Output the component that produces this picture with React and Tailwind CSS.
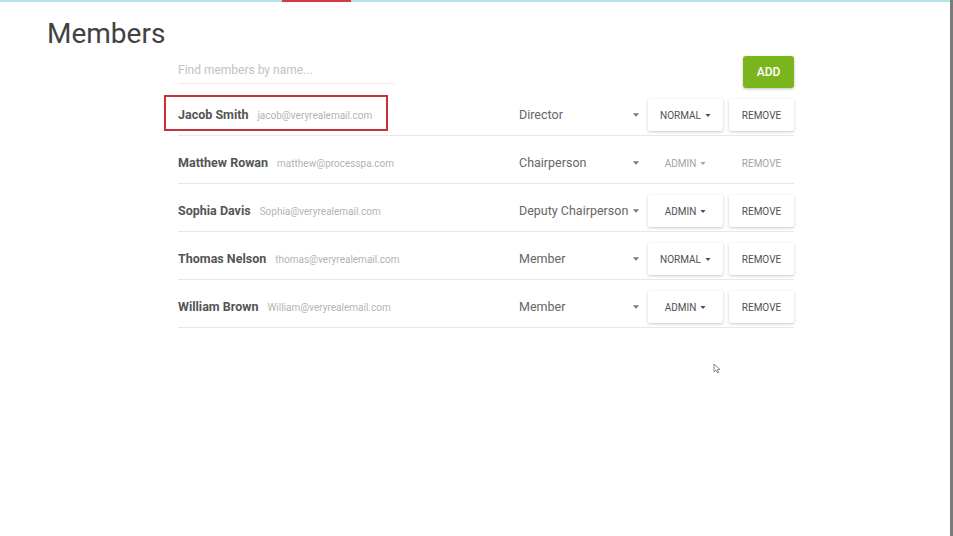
import React from 'react';

const members = [
  { name: 'Jacob Smith', email: 'jacob@veryrealemail.com', role: 'Director', level: 'Normal', flat: false, highlight: true },
  { name: 'Matthew Rowan', email: 'matthew@processpa.com', role: 'Chairperson', level: 'Admin', flat: true },
  { name: 'Sophia Davis', email: 'Sophia@veryrealemail.com', role: 'Deputy Chairperson', level: 'Admin', flat: false },
  { name: 'Thomas Nelson', email: 'thomas@veryrealemail.com', role: 'Member', level: 'Normal', flat: false },
  { name: 'William Brown', email: 'William@veryrealemail.com', role: 'Member', level: 'Admin', flat: false },
];

const Caret = ({ className = '', w = 7, h = 4 }) => (
  <svg width={w} height={h} viewBox="0 0 7 4" className={className}>
    <path d="M0 0h7L3.5 4z" fill="currentColor" />
  </svg>
);

const MemberRow = ({ m }) => {
  const btn = m.flat
    ? 'text-[#a3a3a3]'
    : 'bg-white text-[#505050] shadow-[0_1px_3px_rgba(0,0,0,0.22)]';

  return (
    <div className="relative flex items-center h-[48px] pt-[7px] border-b border-[#e8e8e8]">
      {m.highlight && (
        <div className="absolute left-[-14px] top-[7px] w-[224px] h-[36px] border-2 border-[#c9303a]" />
      )}
      <div className="w-[341px] flex items-baseline whitespace-nowrap">
        <span className="text-[12.5px] font-bold text-[#555]">{m.name}</span>
        <span className="ml-[9px] text-[10px] text-[#b3b3b3]">{m.email}</span>
      </div>
      <div className="w-[129px] pr-[9px] flex items-center justify-between text-[12.5px] text-[#666] whitespace-nowrap">
        <span>{m.role}</span>
        <Caret className="text-[#777] shrink-0" w={6} h={4} />
      </div>
      <button className={`w-[75px] h-[32px] rounded-[2px] flex items-center justify-center gap-[4px] text-[10px] ${btn}`}>
        {m.level.toUpperCase()}
        <Caret w={6} h={3} />
      </button>
      <button className={`ml-[6px] w-[65px] h-[32px] rounded-[2px] flex items-center justify-center text-[10px] ${btn}`}>
        REMOVE
      </button>
    </div>
  );
};

const App = () => {
  return (
    <div
      className="relative w-[953px] h-[536px] bg-white overflow-hidden border-r-[3px] border-[#7b7b7b]"
      style={{ fontFamily: 'Roboto, "Liberation Sans", sans-serif' }}
    >
      <div className="h-[2px] bg-[#b5e1ec]">
        <div className="ml-[282px] w-[69px] h-[2px] bg-[#d13a44]" />
      </div>

      <h1 className="pl-[47px] pt-[18px] text-[28px] leading-[28px] text-[#424242]">Members</h1>

      <div className="ml-[178px] w-[616px] mt-[8px]">
        <div className="flex justify-between items-start">
          <div className="w-[217px] h-[28px] border-b border-[#ececec] flex items-center">
            <input
              type="text"
              placeholder="Find members by name..."
              className="w-full text-[12px] text-[#555] placeholder-[#c2c2c2] outline-none bg-transparent"
            />
          </div>
          <button className="w-[51px] h-[32px] rounded-[3px] bg-[#7ab51d] text-white text-[12px] font-medium shadow-[0_1px_3px_rgba(0,0,0,0.25)]">
            ADD
          </button>
        </div>

        {members.map((m) => (
          <MemberRow key={m.name} m={m} />
        ))}
      </div>

      <svg className="absolute left-[713px] top-[363px]" width="8" height="11" viewBox="0 0 8 11">
        <path d="M1 1v8l2-2 1.5 3 1.2-.6L4.3 6.5H7z" fill="#fff" stroke="#8a8a8a" strokeWidth="1" />
      </svg>
    </div>
  );
};

export default App;
